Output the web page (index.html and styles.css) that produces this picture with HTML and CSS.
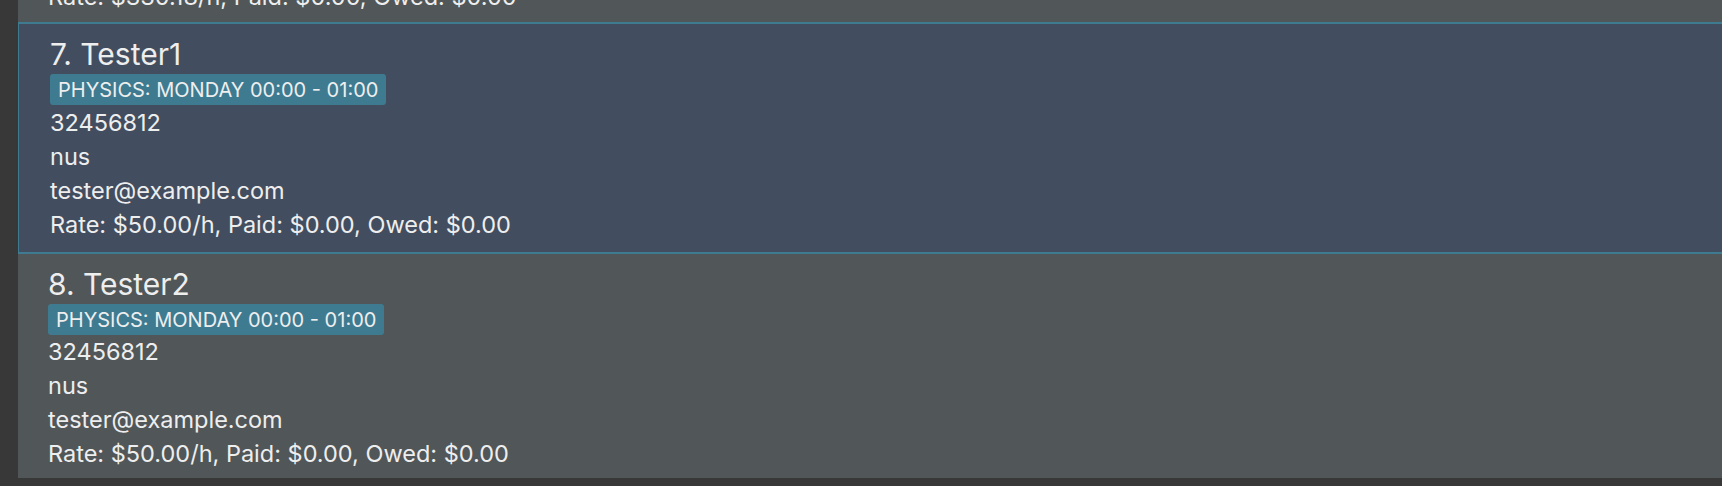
FILE: index.html
```html
<!DOCTYPE html>
<html lang="en">
<head>
<meta charset="utf-8">
<title>Tutor list</title>
<link rel="stylesheet" href="styles.css">
</head>
<body>
<div class="list">
  <div class="card partial">
    <div class="line">Rate: $330.18/h, Paid: $0.00, Owed: $0.00</div>
  </div>
  <div class="card selected">
    <div class="name">7. Tester1</div>
    <div class="tags"><span class="tag">PHYSICS: MONDAY 00:00 - 01:00</span></div>
    <div class="lines">
      <div class="line">32456812</div>
      <div class="line">nus</div>
      <div class="line">tester@example.com</div>
      <div class="line">Rate: $50.00/h, Paid: $0.00, Owed: $0.00</div>
    </div>
  </div>
  <div class="card">
    <div class="name">8. Tester2</div>
    <div class="tags"><span class="tag">PHYSICS: MONDAY 00:00 - 01:00</span></div>
    <div class="lines">
      <div class="line">32456812</div>
      <div class="line">nus</div>
      <div class="line">tester@example.com</div>
      <div class="line">Rate: $50.00/h, Paid: $0.00, Owed: $0.00</div>
    </div>
  </div>
</div>
</body>
</html>
```

FILE: styles.css
```css
html, body {
  margin: 0;
  padding: 0;
  background: #383838;
  overflow: hidden;
  height: 100%;
}

body {
  font-family: Inter, "Noto Sans", sans-serif;
  color: #eeeeee;
  padding-left: 18px;
}

.list {
  display: flex;
  flex-direction: column;
  margin-top: -20px;
  margin-right: -20px;
}

.card {
  background: #515658;
  padding: 12px 0 7px 30px;
  display: flex;
  flex-direction: column;
}

.card.partial {
  padding-top: 0;
  padding-bottom: 8px;
}

.card.selected {
  background: #424d5f;
  border-top: 2px solid #3e7b91;
  border-bottom: 2px solid #3e7b91;
  border-left: 1px solid #3e7b91;
  padding: 12px 0 10px 31px;
}

.name {
  font-size: 30px;
  line-height: 36px;
  white-space: nowrap;
}

.tags {
  display: flex;
  margin-top: 2px;
}

.tag {
  background: #3e7b91;
  border-radius: 3px;
  font-size: 20px;
  line-height: 23px;
  padding: 5px 8px 3px 8px;
  white-space: nowrap;
}

.lines {
  display: flex;
  flex-direction: column;
}

.selected .lines {
  margin-top: 1px;
}

.line {
  font-size: 23.5px;
  line-height: 34px;
  white-space: nowrap;
}
```
